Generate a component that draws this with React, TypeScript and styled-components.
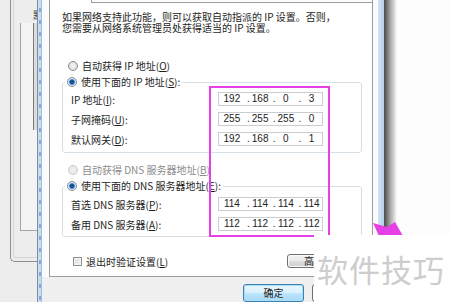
import styled, { createGlobalStyle } from 'styled-components';

const GlobalStyle = createGlobalStyle`
  html, body {
    margin: 0;
    padding: 0;
    background: #fdfdfd;
  }
  body {
    font-family: "Noto Sans CJK SC", "Liberation Sans", sans-serif;
    font-size: 10px;
    color: #1e1e1e;
  }
  #root {
    width: 450px;
    height: 302px;
    overflow: hidden;
  }
`;

const ipRows = [
  { text: 'IP 地址', hotkey: 'I', octets: ['192', '168', '0', '3'] },
  { text: '子网掩码', hotkey: 'U', octets: ['255', '255', '255', '0'] },
  { text: '默认网关', hotkey: 'D', octets: ['192', '168', '0', '1'] },
];

const dnsRows = [
  { text: '首选 DNS 服务器', hotkey: 'P', octets: ['114', '114', '114', '114'] },
  { text: '备用 DNS 服务器', hotkey: 'A', octets: ['112', '112', '112', '112'] },
];

function Hotkey({ k }: { k: string }) {
  return (
    <>
      (<u>{k}</u>)
    </>
  );
}

function IpField({ octets }: { octets: string[] }) {
  return (
    <IpBox>
      {octets.map((o, i) => (
        <Octet key={i}>
          {i > 0 && <Dot>.</Dot>}
          <OctetText>{o}</OctetText>
        </Octet>
      ))}
    </IpBox>
  );
}

export default function App() {
  return (
    <Screen>
      <GlobalStyle />
      <ParentPane>
        <ParentOuter>
          <ParentInner>
            <ParentLabel>默</ParentLabel>
            <ParentList>
              <ParentScroll />
            </ParentList>
          </ParentInner>
        </ParentOuter>
      </ParentPane>
      <FrameLeft />
      <Client>
        <TabArea>
          <TabHead>
            <SelectedTab />
            <TabRule />
          </TabHead>
          <TabPage>
            <Intro>
              如果网络支持此功能，则可以获取自动指派的 IP 设置。否则，
              <br />
              您需要从网络系统管理员处获得适当的 IP 设置。
            </Intro>
            <Option $top={27}>
              <Radio />
              <span>
                自动获得 IP 地址<Hotkey k="O" />
              </span>
            </Option>
            <Group $top={4}>
              <Legend>
                <Option>
                  <Radio $checked />
                  <span>
                    使用下面的 IP 地址<Hotkey k="S" />:
                  </span>
                </Option>
              </Legend>
              <Rows $top={4} $bottom={6}>
                {ipRows.map((r) => (
                  <FieldRow key={r.text}>
                    <FieldLabel>
                      {r.text}
                      <Hotkey k={r.hotkey} />:
                    </FieldLabel>
                    <IpField octets={r.octets} />
                  </FieldRow>
                ))}
              </Rows>
            </Group>
            <Option $top={11} $disabled>
              <Radio $disabled />
              <span>
                自动获得 DNS 服务器地址<Hotkey k="B" />
              </span>
            </Option>
            <Group $top={4}>
              <Legend>
                <Option>
                  <Radio $checked />
                  <span>
                    使用下面的 DNS 服务器地址<Hotkey k="E" />:
                  </span>
                </Option>
              </Legend>
              <Rows $top={5} $bottom={5}>
                {dnsRows.map((r) => (
                  <FieldRow key={r.text}>
                    <FieldLabel>
                      {r.text}
                      <Hotkey k={r.hotkey} />:
                    </FieldLabel>
                    <IpField octets={r.octets} />
                  </FieldRow>
                ))}
              </Rows>
            </Group>
            <BottomRow>
              <CheckLabel>
                <Checkbox />
                <span>
                  退出时验证设置<Hotkey k="L" />
                </span>
              </CheckLabel>
              <PushButton $width={75}>
                高级<Hotkey k="V" />...
              </PushButton>
            </BottomRow>
          </TabPage>
        </TabArea>
        <Footer>
          <PushButton $width={61} $height={18} $default>
            确定
          </PushButton>
          <PushButton $width={61} $height={18}>
            取消
          </PushButton>
        </Footer>
      </Client>
      <FrameRight />
      <Shadow />

      <Highlight />
      <Arrow width="34" height="18" viewBox="0 0 34 18">
        <polygon points="2,3 16,7 24,2 32,16 8,16" fill="#e63fe6" />
      </Arrow>
      <Watermark>软件技巧</Watermark>
    </Screen>
  );
}

const Screen = styled.div`
  position: relative;
  display: flex;
  width: 450px;
  height: 302px;
  background: #fdfdfd;
  overflow: hidden;
`;

/* parent dialog peeking out on the left */
const ParentPane = styled.div`
  width: 37px;
  flex-shrink: 0;
  box-sizing: border-box;
  padding-left: 10px;
  background: #ededed;
`;

const ParentOuter = styled.div`
  height: 262px;
  box-sizing: border-box;
  padding-left: 2px;
  border-left: 1px solid #8f8f8f;
  border-bottom: 1px solid #8f8f8f;
  border-bottom-left-radius: 5px;
`;

const ParentInner = styled.div`
  height: 258px;
  box-sizing: border-box;
  padding: 9px 0 0 6px;
  border-left: 1px solid #d4d4d4;
  border-bottom: 1px solid #d4d4d4;
  border-bottom-left-radius: 4px;
`;

const ParentLabel = styled.div`
  height: 12px;
  line-height: 12px;
  text-indent: 13px;
  overflow: hidden;
  white-space: nowrap;
  color: #444;
`;

const ParentList = styled.div`
  height: 207px;
  margin-top: 2px;
  display: flex;
  justify-content: flex-end;
  border-left: 1px solid #a4a4a4;
  border-bottom: 1px solid #a4a4a4;
  background: #f4f4f4;
`;

const ParentScroll = styled.div`
  width: 3px;
  height: 107px;
  border-left: 1px solid #7a7a7a;
  background: #dcdcdc;
`;

const FrameLeft = styled.div`
  width: 5px;
  flex-shrink: 0;
  background:
    repeating-linear-gradient(to bottom, transparent 0 8px, #7fa8dc 8px 12px) 2px 0 / 2px 100% no-repeat,
    linear-gradient(to right, #7d8ea3 0 1px, #c9ddf3 1px 4px, #a5bdd8 4px 5px);
`;

const Client = styled.div`
  width: 336px;
  flex-shrink: 0;
  display: flex;
  flex-direction: column;
  background: #fbfbfb;
`;

const TabArea = styled.div`
  height: 281px;
  box-sizing: border-box;
  padding: 0 5px 0 7px;
  display: flex;
  flex-direction: column;
`;

const TabHead = styled.div`
  display: flex;
  height: 3px;
`;

const SelectedTab = styled.div`
  width: 43px;
  box-sizing: border-box;
  border-left: 1px solid #9a9da3;
  border-right: 1px solid #9a9da3;
  background: #fff;
`;

const TabRule = styled.div`
  flex: 1;
  box-sizing: border-box;
  border-bottom: 1px solid #9a9da3;
  border-right: 1px solid #9a9da3;
  border-bottom-right-radius: 0;
  margin-top: 0;
`;

const TabPage = styled.div`
  flex: 1;
  box-sizing: border-box;
  padding: 0 10px 0 12px;
  border: 1px solid #9a9da3;
  border-top: none;
  background: #fff;
  display: flex;
  flex-direction: column;
`;

const Intro = styled.p`
  margin: 8px 0 0;
  line-height: 11px;
  white-space: nowrap;
`;

const Option = styled.div<{ $top?: number; $disabled?: boolean }>`
  display: flex;
  align-items: center;
  gap: 4px;
  height: 12px;
  line-height: 12px;
  margin-top: ${(p) => p.$top ?? 0}px;
  padding-left: ${(p) => (p.$top !== undefined ? 6 : 0)}px;
  color: ${(p) => (p.$disabled ? '#8c8c8c' : 'inherit')};
  white-space: nowrap;
`;

const Radio = styled.span<{ $checked?: boolean; $disabled?: boolean }>`
  width: 10px;
  height: 10px;
  flex-shrink: 0;
  box-sizing: border-box;
  border-radius: 50%;
  border: 1px solid ${(p) => (p.$disabled ? '#c9c9c9' : '#8a8c8f')};
  background: ${(p) =>
    p.$checked
      ? 'radial-gradient(circle, #174f93 0 1.6px, #4d95dc 2.6px, #cfe3f6 3.4px, #f3f3f3 4.2px)'
      : p.$disabled
        ? 'radial-gradient(circle, #f2f2f2 0, #e2e2e2 100%)'
        : 'radial-gradient(circle, #f6f6f6 0, #d6d6d6 100%)'};
`;

const Group = styled.fieldset<{ $top: number }>`
  margin: ${(p) => p.$top}px 0 0;
  padding: 0;
  min-width: 0;
  border: 1px solid #d5dfe5;
  border-radius: 3px;
`;

const Legend = styled.legend`
  margin-left: 2px;
  padding: 0 2px;
  line-height: 12px;
`;

const Rows = styled.div<{ $top: number; $bottom: number }>`
  display: flex;
  flex-direction: column;
  gap: 6px;
  padding: ${(p) => p.$top}px 0 ${(p) => p.$bottom}px 8px;
`;

const FieldRow = styled.div`
  display: flex;
  align-items: center;
  height: 14px;
`;

const FieldLabel = styled.span`
  width: 147px;
  white-space: nowrap;
`;

const IpBox = styled.div`
  display: flex;
  width: 105px;
  height: 14px;
  box-sizing: border-box;
  border: 1px solid #c9ccd0;
  background: #fff;
  font-family: "Liberation Sans", "Noto Sans CJK SC", sans-serif;
  font-size: 10px;
  line-height: 12px;
  color: #222;
`;

const Octet = styled.span`
  flex: 1;
  display: flex;
`;

const Dot = styled.span`
  width: 5px;
  text-align: right;
`;

const OctetText = styled.span`
  flex: 1;
  text-align: center;
`;

const BottomRow = styled.div`
  display: flex;
  align-items: center;
  justify-content: space-between;
  height: 14px;
  margin-top: 17px;
  padding-left: 11px;
`;

const CheckLabel = styled.label`
  display: flex;
  align-items: center;
  gap: 4px;
  white-space: nowrap;
`;

const Checkbox = styled.span`
  width: 9px;
  height: 9px;
  box-sizing: border-box;
  border: 1px solid #8f8f8f;
  background: linear-gradient(135deg, #dcdcdc, #f7f7f7);
  box-shadow: inset 0 0 0 1px #f4f4f4;
`;

const PushButton = styled.button<{ $width: number; $height?: number; $default?: boolean }>`
  width: ${(p) => p.$width}px;
  height: ${(p) => p.$height ?? 14}px;
  padding: 0;
  box-sizing: border-box;
  font-family: inherit;
  font-size: 10px;
  line-height: 1;
  color: #1e1e1e;
  border-radius: 3px;
  border: 1px solid ${(p) => (p.$default ? '#3c7fb1' : '#707070')};
  background: ${(p) =>
    p.$default
      ? 'linear-gradient(#eaf6fd, #d9f0fc 50%, #bee6fd 50%, #a7d9f5)'
      : 'linear-gradient(#f2f2f2, #ebebeb 50%, #dddddd 50%, #cfcfcf)'};
  box-shadow: ${(p) => (p.$default ? 'inset 0 0 0 1px #a8e0f8' : 'inset 0 0 0 1px #fbfbfb')};
  white-space: nowrap;
`;

const Footer = styled.div`
  flex: 1;
  display: flex;
  justify-content: flex-end;
  align-items: flex-start;
  gap: 8px;
  padding: 7px 5px 0 0;
  background: #f0f0f0;
`;

const FrameRight = styled.div`
  width: 6px;
  flex-shrink: 0;
  background: linear-gradient(to right, #d3e3f4, #b6cfeb);
`;

const Shadow = styled.div`
  width: 13px;
  flex-shrink: 0;
  background: linear-gradient(to right, #4a4a4a 0, #656565 2px, #a3a3a3 6px, #e2e2e2 11px, #fdfdfd 13px);
`;

/* annotation drawn over the screenshot */
const Highlight = styled.div`
  position: absolute;
  left: 209px;
  top: 86px;
  width: 121px;
  height: 151px;
  box-sizing: border-box;
  border: 2px solid #e63fe6;
`;

const Arrow = styled.svg`
  position: absolute;
  left: 371px;
  top: 220px;
`;

const Watermark = styled.div`
  position: absolute;
  left: 314px;
  top: 235px;
  right: 0;
  bottom: 0;
  display: flex;
  align-items: center;
  padding-left: 3px;
  background: #fff;
  font-size: 31px;
  letter-spacing: 1px;
  color: #cdcdcd;
  white-space: nowrap;
`;
